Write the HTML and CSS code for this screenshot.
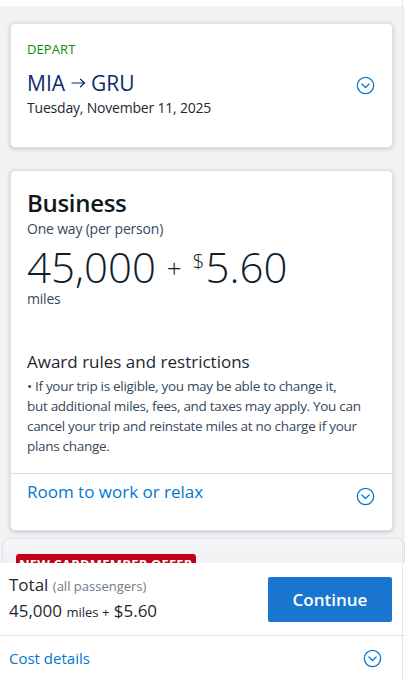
FILE: index.html
```html
<!DOCTYPE html>
<html lang="en">
<head>
  <meta charset="UTF-8" />
  <meta name="viewport" content="width=device-width, initial-scale=1.0"/>
  <title>Choose flights</title>
  <link rel="stylesheet" href="styles.css">
</head>
<body>
  <div class="top-strip"></div>

  <main class="main">
    <section class="card trip">
      <div class="trip-info">
        <p class="label">DEPART</p>
        <h2 class="route">MIA <svg class="arrow" viewBox="0 0 15 10"><path d="M1 5 H13.5 M9.5 1.2 L13.5 5 L9.5 8.8"/></svg> GRU</h2>
        <p class="date">Tuesday, November 11, 2025</p>
      </div>
      <svg class="chev" viewBox="0 0 20 20"><circle cx="10" cy="10" r="8.6"/><path d="M6.2 8.4 L10 12.1 L13.8 8.4"/></svg>
    </section>

    <section class="card fare">
      <div class="fare-body">
        <h2 class="cabin">Business</h2>
        <p class="sub">One way (per person)</p>
        <p class="price">45,000 <span class="plus">+</span> <span class="dollar">$</span>5.60</p>
        <p class="sub">miles</p>

        <h3 class="rules-title">Award rules and restrictions</h3>
        <p class="rules">&bull; If your trip is eligible, you may be able to change it, but&nbsp;additional miles, fees, and taxes may apply. You can cancel your trip and reinstate miles at no charge if your plans change.</p>
      </div>
      <div class="fare-foot">
        <a href="#" class="link-lg">Room to work or relax</a>
        <svg class="chev" viewBox="0 0 20 20"><circle cx="10" cy="10" r="8.6"/><path d="M6.2 8.4 L10 12.1 L13.8 8.4"/></svg>
      </div>
    </section>

    <section class="card offer">
      <span class="badge">NEW CARDMEMBER OFFER</span>
    </section>
  </main>

  <footer class="summary">
    <div class="summary-top">
      <div class="totals">
        <p class="total-label">Total <span class="muted">(all passengers)</span></p>
        <p class="total-value">45,000 <span class="small">miles +</span> $5.60</p>
      </div>
      <button class="continue">Continue</button>
    </div>
    <div class="summary-foot">
      <a href="#" class="link-sm">Cost details</a>
      <svg class="chev" viewBox="0 0 20 20"><circle cx="10" cy="10" r="8.6"/><path d="M6.2 8.4 L10 12.1 L13.8 8.4"/></svg>
    </div>
  </footer>
  <div class="scroll-line"></div>
</body>
</html>
```

FILE: styles.css
```css
* {
  box-sizing: border-box;
  margin: 0;
  padding: 0;
  font-family: 'Open Sans', sans-serif;
}

body {
  background-color: #f1f2f4;
  color: #36495a;
  height: 680px;
  overflow: hidden;
}

.top-strip {
  height: 6px;
  background: #fff;
}

.main {
  padding: 17px 12px 0 10px;
  display: flex;
  flex-direction: column;
  gap: 22px;
}

.card {
  background: #fff;
  border-radius: 5px;
  border: 1px solid #dde2e8;
  box-shadow: 0 1px 4px rgba(0, 0, 0, 0.2);
}

.chev {
  width: 19px;
  height: 19px;
  flex-shrink: 0;
  fill: none;
  stroke: #0078d2;
  stroke-width: 1.3;
  stroke-linecap: round;
  stroke-linejoin: round;
}

/* trip card */
.trip {
  display: flex;
  align-items: center;
  justify-content: space-between;
  padding: 15px 17px 28px 16px;
}

.trip .chev {
  margin-top: 12px;
}

.label {
  font-size: 13px;
  line-height: 20px;
  color: #0b8a12;
  letter-spacing: 0.1px;
}

.route {
  font-size: 21px;
  font-weight: 400;
  color: #0c2c6b;
  line-height: 28px;
  margin-top: 10px;
}

.arrow {
  width: 15px;
  height: 10px;
  fill: none;
  stroke: #0c2c6b;
  stroke-width: 1.2;
  stroke-linecap: round;
  stroke-linejoin: round;
  vertical-align: 3px;
}

.date {
  font-size: 14px;
  line-height: 22px;
  color: #1e2730;
  letter-spacing: -0.2px;
}

/* fare card */
.fare-body {
  padding: 16px 10px 17px 16px;
}

.cabin {
  font-size: 24px;
  font-weight: 600;
  line-height: 32px;
  color: #101820;
  letter-spacing: -0.3px;
}

.sub {
  font-size: 14px;
  line-height: 20px;
  color: #36495a;
  letter-spacing: -0.2px;
}

.price {
  font-size: 42px;
  font-weight: 300;
  line-height: 42px;
  color: #0f1e2e;
  margin-top: 1px;
}

.plus {
  font-size: 26px;
  vertical-align: 5px;
}

.dollar {
  font-size: 21px;
  vertical-align: 14px;
  margin-right: 1px;
}

.rules-title {
  font-size: 17px;
  font-weight: 400;
  line-height: 24px;
  color: #1e2730;
  margin-top: 41px;
}

.rules {
  font-size: 13.5px;
  line-height: 20px;
  color: #36495a;
  margin-top: 2px;
  letter-spacing: -0.3px;
}

.fare-foot {
  border-top: 1px solid #d5dde5;
  display: flex;
  justify-content: space-between;
  align-items: center;
  padding: 3px 17px 24px 16px;
}

.fare-foot .chev {
  margin-top: 10px;
}

.link-lg {
  font-size: 17px;
  color: #0078d2;
  text-decoration: none;
  line-height: 24px;
}

/* offer card, cut by the footer */
.offer {
  height: 60px;
  padding: 13px 4px 0 4px;
  background: linear-gradient(#f4f5f7, #eceef1);
  margin-top: -15px;
  margin-left: -8px;
  margin-right: -12px;
  border-radius: 8px 8px 0 0;
  box-shadow: none;
}

.badge {
  display: inline-block;
  margin-left: 9px;
  background: #c30019;
  color: #fff;
  font-size: 13px;
  font-weight: 700;
  line-height: 18px;
  padding: 1px 3px;
  border-radius: 3px;
  letter-spacing: 0.2px;
}

/* bottom summary */
.summary {
  position: fixed;
  left: 0;
  right: 0;
  bottom: 0;
  height: 117px;
  background: #fff;
}

.summary-top {
  display: flex;
  justify-content: space-between;
  align-items: center;
  padding: 13px 13px 13px 9px;
  border-bottom: 1px solid #dfe3e8;
  height: 73px;
}

.total-label {
  font-size: 17px;
  line-height: 24px;
  color: #1e2730;
}

.muted {
  font-size: 13px;
  color: #6e7c88;
}

.total-value {
  font-size: 17px;
  line-height: 26px;
  color: #1e2730;
}

.small {
  font-size: 13px;
}

.continue {
  width: 124px;
  height: 45px;
  background: #1a75d0;
  color: #fff;
  border: none;
  border-radius: 2px;
  font-size: 17px;
  font-weight: 600;
  font-family: 'Open Sans', sans-serif;
}

.summary-foot {
  display: flex;
  justify-content: space-between;
  align-items: center;
  padding: 12px 23px 0 9px;
}

.link-sm {
  font-size: 15px;
  color: #0078d2;
  text-decoration: none;
}

.scroll-line {
  position: fixed;
  top: 0;
  right: 2px;
  width: 1px;
  height: 680px;
  background: #e3e6ea;
}
```
